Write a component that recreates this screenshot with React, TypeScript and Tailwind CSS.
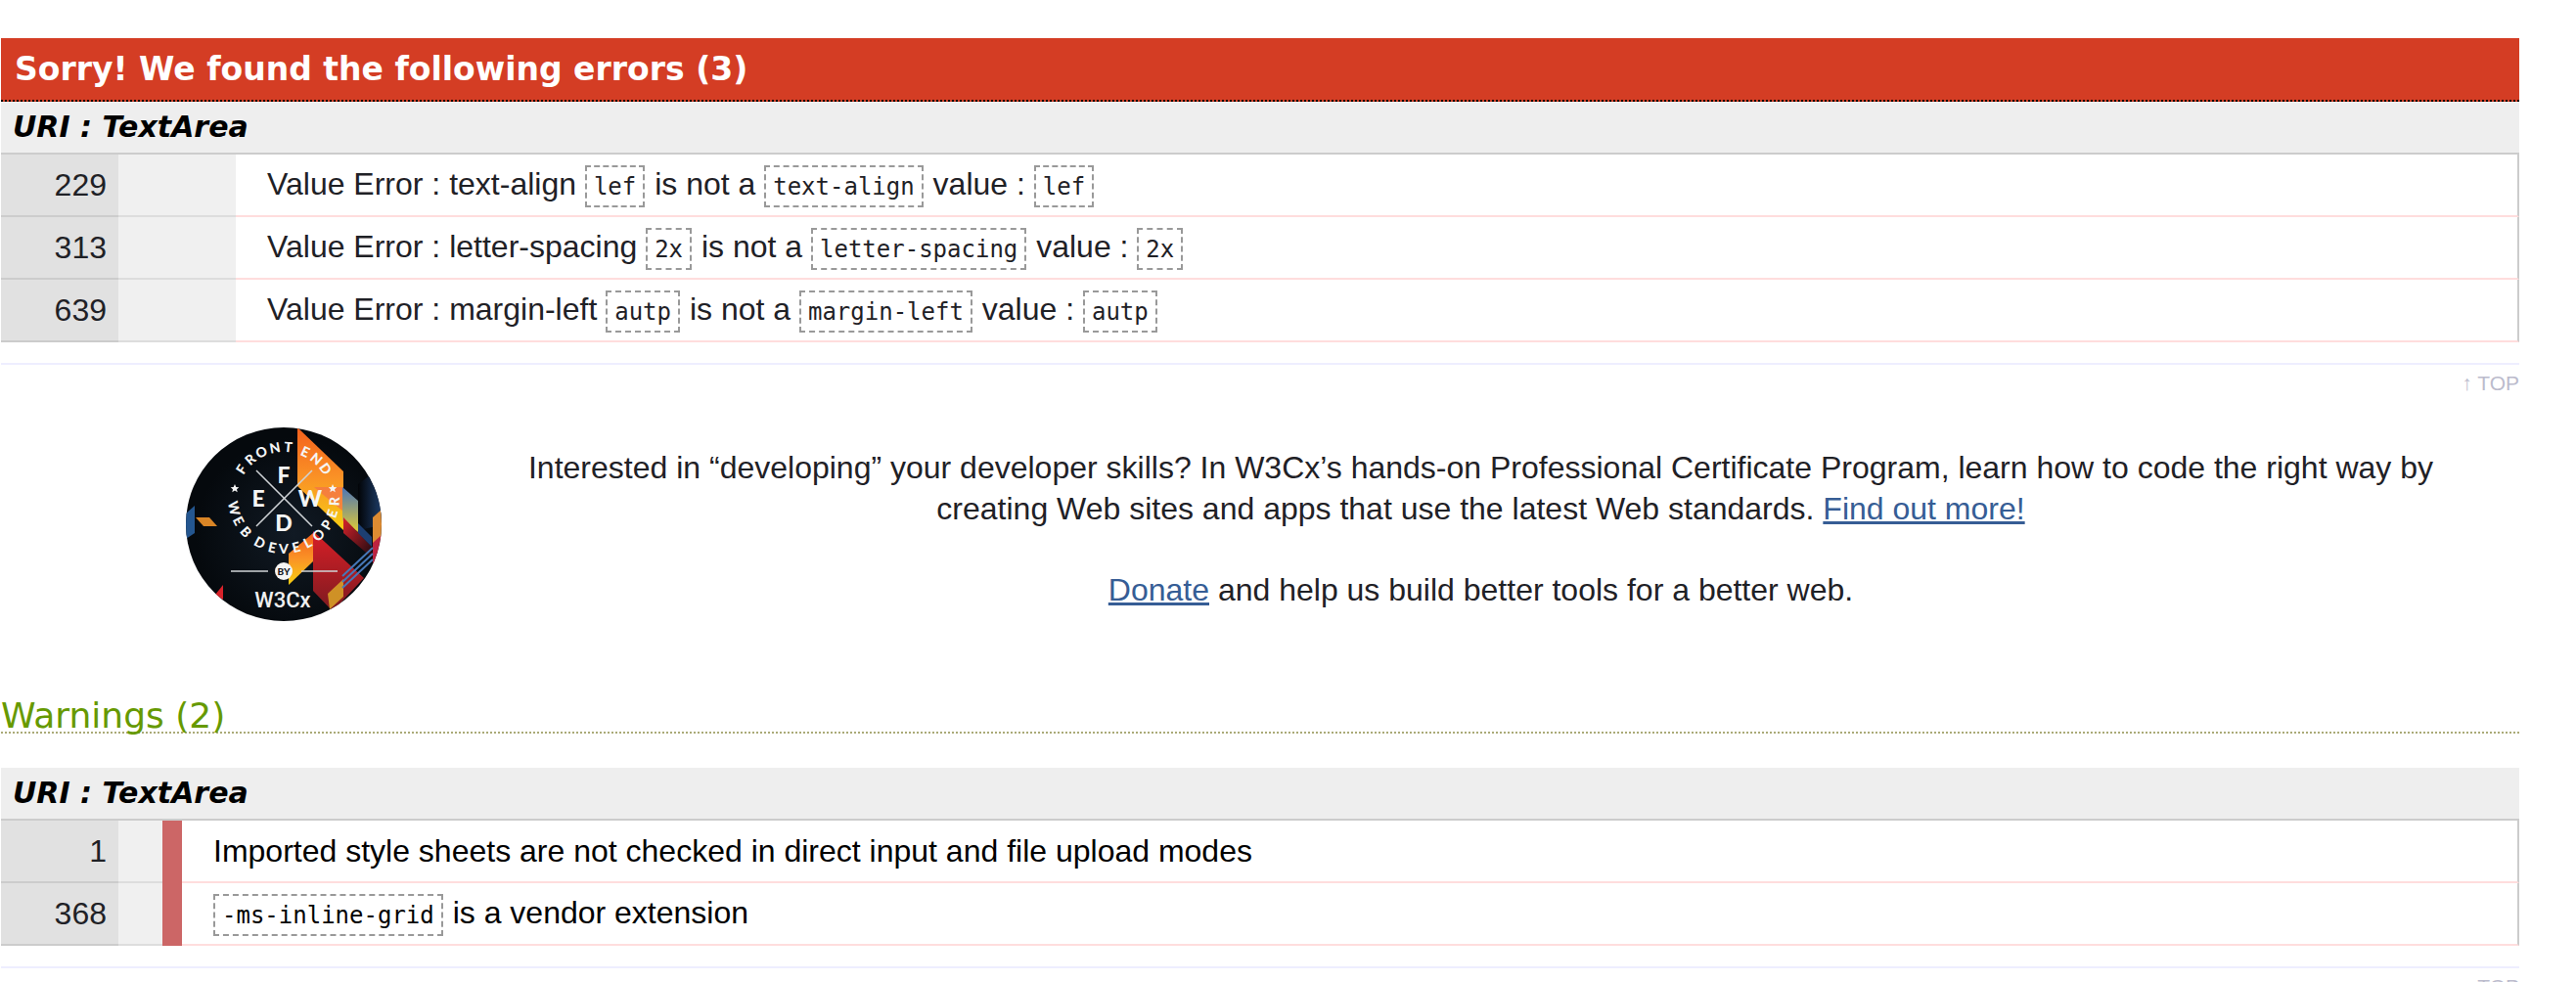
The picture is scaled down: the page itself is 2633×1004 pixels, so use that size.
import type { ReactNode } from "react";

function Code({ children }: { children: ReactNode }) {
  return (
    <code className="mr-px inline-block border-2 border-dashed border-[#999] px-[7px] pt-0.5 pb-px text-2xl leading-9 font-['DejaVu_Sans_Mono',monospace]">
      {children}
    </code>
  );
}

function FileHeading() {
  return (
    <h4 className="bg-[#eee] pl-3 text-3xl leading-[52px] font-bold text-black italic font-['DejaVu_Sans',sans-serif]">
      URI : TextArea
    </h4>
  );
}

function TopLink() {
  return (
    <p className="mt-[21px] border-t-2 border-[#eef] pt-1 text-right text-[21px] leading-[30px]">
      <a href="#top" className="text-[#bbc]">↑ TOP</a>
    </p>
  );
}

type ErrorRow = { line: number; property: string; bad: string };

const errors: ErrorRow[] = [
  { line: 229, property: "text-align", bad: "lef" },
  { line: 313, property: "letter-spacing", bad: "2x" },
  { line: 639, property: "margin-left", bad: "autp" },
];

const tableClass = "w-full table-fixed border-separate border-spacing-0 border-t-2 border-[#ccc]";
const lineClass = "h-16 border-b-2 border-[#ccc] bg-[#e1e1e1] pr-3 text-right";
const contextClass = "border-b-2 border-[#ddd] bg-[#f0f0f0]";
const messageClass = "border-r-2 border-b-2 border-r-[#ccc] border-b-[#fdd] pl-8";
const linkClass = "text-[#365d95] underline decoration-[3px]";

function ErrorTable() {
  return (
    <table className={tableClass} aria-label="Errors">
      <colgroup>
        <col className="w-[120px]" />
        <col className="w-[120px]" />
        <col />
      </colgroup>
      <tbody>
        {errors.map((e) => (
          <tr key={e.line}>
            <td className={lineClass}>{e.line}</td>
            <td className={contextClass}></td>
            <td className={messageClass}>
              Value Error : {e.property} <Code>{e.bad}</Code> is not a <Code>{e.property}</Code> value : <Code>{e.bad}</Code>
            </td>
          </tr>
        ))}
      </tbody>
    </table>
  );
}

function WarningTable() {
  const rows = [
    { line: 1, message: <>Imported style sheets are not checked in direct input and file upload modes</> },
    { line: 368, message: <><Code>-ms-inline-grid</Code> is a vendor extension</> },
  ];
  return (
    <table className={tableClass} aria-label="Warnings">
      <colgroup>
        <col className="w-[120px]" />
        <col className="w-[45px]" />
        <col className="w-5" />
        <col />
      </colgroup>
      <tbody>
        {rows.map((r) => (
          <tr key={r.line}>
            <td className={lineClass}>{r.line}</td>
            <td className={contextClass}></td>
            <td className="bg-[#c66]"></td>
            <td className={`${messageClass} text-black`}>{r.message}</td>
          </tr>
        ))}
      </tbody>
    </table>
  );
}

type RingLetter = [string, number];

/* Letter and its angle on the ring, in degrees from the ring's top or bottom. */
const upperRing: RingLetter[] = [
  ["F", -56], ["R", -41], ["O", -26], ["N", -10], ["T", 5], ["E", 25], ["N", 40], ["D", 55],
];
const lowerRing: RingLetter[] = [
  ["W", 78], ["E", 63], ["B", 48], ["D", 28], ["E", 13], ["V", 0],
  ["E", -14], ["L", -28], ["O", -43], ["P", -58], ["E", -72], ["R", -86],
];

function Badge() {
  return (
    <svg viewBox="0 0 200 198" className="h-[198px] w-[200px]" role="img" aria-label="Front End Web Developer by W3Cx">
      <defs>
        <clipPath id="disc"><ellipse cx="100" cy="99" rx="100" ry="99" /></clipPath>
        <radialGradient id="night" cx="0.55" cy="0.55" r="0.5">
          <stop offset="0" stopColor="#111a24" />
          <stop offset="1" stopColor="#05090d" />
        </radialGradient>
        <linearGradient id="flame" x1="0" y1="0" x2="0" y2="1">
          <stop offset="0" stopColor="#f4601c" />
          <stop offset="0.5" stopColor="#fa9326" />
          <stop offset="1" stopColor="#f7cf12" />
        </linearGradient>
        <linearGradient id="ember" x1="0" y1="0" x2="0" y2="1">
          <stop offset="0" stopColor="#d91f27" />
          <stop offset="1" stopColor="#7c1a20" />
        </linearGradient>
        <linearGradient id="haze" x1="0" y1="0" x2="0" y2="1">
          <stop offset="0" stopColor="#4a74b8" />
          <stop offset="1" stopColor="#e0cb35" />
        </linearGradient>
        <linearGradient id="shade" x1="0" y1="0" x2="1" y2="0">
          <stop offset="0" stopColor="#020407" />
          <stop offset="1" stopColor="#1d3c68" />
        </linearGradient>
        <linearGradient id="fade" x1="0" y1="0" x2="1" y2="1">
          <stop offset="0" stopColor="#d8222a" />
          <stop offset="1" stopColor="#1a0a10" />
        </linearGradient>
      </defs>
      <g clipPath="url(#disc)">
        <rect width="200" height="198" fill="url(#night)" />
        <path d="M176 58 L200 40 V100 L176 105Z" fill="url(#shade)" />
        <path d="M114 0 L161 45 V105 L114 60Z" fill="url(#flame)" />
        <path d="M131 61 H161 V86Z" fill="#f4704a" opacity="0.7" />
        <path d="M160 61 L176 75 V107 L160 95Z" fill="url(#haze)" />
        <path d="M161 92 L190 122 V133 L161 108Z" fill="url(#fade)" />
        <path d="M176 98 L190 112 V122 L176 108Z" fill="#1d3f72" />
        <path d="M191 92 L200 84 V112 L191 122Z" fill="#dd8b32" />
        <path d="M191 118 L200 110 V150 L191 138Z" fill="#bd2340" />
        <path d="M0 88 L9 80 V108 L0 114Z" fill="#24568f" />
        <path d="M10 92 L24 92 L32 101 L18 101Z" fill="#d98526" />
        <path d="M30 171 L38 161 V176Z" fill="#d8222a" />
        <path d="M105 129 L130 108 V137 L105 161Z" fill="url(#flame)" />
        <path d="M130 106 L182 154 L180 156 L150 188 L130 167Z" fill="url(#ember)" />
        <path d="M145 170 L161 155 V173 L147 186Z" fill="#cf9126" />
        <g stroke="#4678b8" strokeWidth="2">
          <path d="M160 152 L191 123" />
          <path d="M160 158 L191 129" />
          <path d="M160 164 L191 135" />
        </g>
        <g stroke="#cfd3d6" strokeWidth="1.5">
          <path d="M72 44 L129 101" />
          <path d="M129 44 L72 101" />
          <path d="M46 147 H84 M118 147 H155" />
        </g>
        <g fill="#f5f5f5">
          <path d="M50 58 L51.3 61 L54.3 61.2 L52 63.2 L52.7 66.2 L50 64.6 L47.3 66.2 L48 63.2 L45.7 61.2 L48.7 61Z" />
          <path d="M150 58 L151.3 61 L154.3 61.2 L152 63.2 L152.7 66.2 L150 64.6 L147.3 66.2 L148 63.2 L145.7 61.2 L148.7 61Z" />
          <circle cx="100" cy="147" r="9" />
        </g>
        <g fill="#f5f5f5" textAnchor="middle" className="font-['Lato',sans-serif]">
          <g fontSize="23" fontWeight="900">
            <text x="100" y="57">F</text>
            <text x="74" y="81">E</text>
            <text x="127" y="81">W</text>
            <text x="100" y="106">D</text>
          </g>
          <g fontSize="14" fontWeight="900">
            {upperRing.map(([letter, angle]) => (
              <text key={angle} x="100" y="25" transform={`rotate(${angle} 100 72)`}>{letter}</text>
            ))}
            {lowerRing.map(([letter, angle]) => (
              <text key={angle} x="100" y="129" transform={`rotate(${angle} 100 72)`}>{letter}</text>
            ))}
          </g>
          <text x="100" y="151" fontSize="10" fontWeight="900" fill="#15191f">BY</text>
        </g>
        <text x="99" y="184" fontSize="22" fill="#f0f0f0" textAnchor="middle" className="font-medium font-['Roboto',sans-serif]">W3Cx</text>
      </g>
    </svg>
  );
}

export default function App() {
  return (
    <main className="mr-[58px] ml-px pt-[39px] text-[32px] leading-[42px] text-[#1f2126] font-['Liberation_Sans',Arial,sans-serif]">
      <section>
        <h3 className="border-b-2 border-dotted border-black bg-[#d43d24] pl-3.5 text-[33px] leading-[63px] font-black text-white font-['DejaVu_Sans',sans-serif]">
          Sorry! We found the following errors (3)
        </h3>
        <FileHeading />
        <ErrorTable />
        <TopLink />
      </section>
      <section className="flex items-start pt-[30px]">
        <div className="ml-[189px] shrink-0"><Badge /></div>
        <div className="ml-[62px] flex-1 px-16 pt-5 text-center">
          <p>
            Interested in “developing” your developer skills? In W3Cx’s hands-on Professional Certificate Program, learn how to code the right way by creating Web sites and apps that use the latest Web standards. <a href="#more" className={linkClass}>Find out more!</a>
          </p>
          <p className="mt-[41px]"><a href="#donate" className={linkClass}>Donate</a> and help us build better tools for a better web.</p>
        </div>
      </section>
      <section className="pt-[81px]">
        <h3 className="mb-[35px] border-b-2 border-dotted border-[#aa7] text-4xl leading-8 text-[#690] font-['DejaVu_Sans',sans-serif]">Warnings (2)</h3>
        <FileHeading />
        <WarningTable />
        <TopLink />
      </section>
    </main>
  );
}
